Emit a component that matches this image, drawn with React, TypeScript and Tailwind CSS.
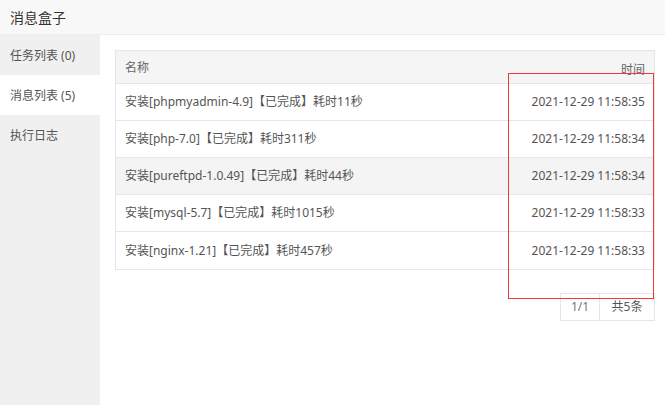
import React from "react";

const rows = [
  { name: "安装[phpmyadmin-4.9]【已完成】耗时11秒", time: "2021-12-29 11:58:35" },
  { name: "安装[php-7.0]【已完成】耗时311秒", time: "2021-12-29 11:58:34" },
  { name: "安装[pureftpd-1.0.49]【已完成】耗时44秒", time: "2021-12-29 11:58:34", hover: true },
  { name: "安装[mysql-5.7]【已完成】耗时1015秒", time: "2021-12-29 11:58:33" },
  { name: "安装[nginx-1.21]【已完成】耗时457秒", time: "2021-12-29 11:58:33" },
];

export default function App() {
  return (
    <div
      className="relative w-[665px] h-[405px] bg-white overflow-hidden text-[#333]"
      style={{ fontFamily: '"Noto Sans", "Noto Sans CJK SC", sans-serif' }}
    >
      <div className="h-[35px] bg-[#f8f8f8] border-b border-[#eee] pl-[10px] flex items-center text-[14px] text-[#333]">
        消息盒子
      </div>
      <div className="flex h-[370px]">
        <div className="w-[100px] bg-[#f0f0f0] flex flex-col text-[12px] text-[#555]">
          <div className="h-[40px] flex items-center pl-[10px] pt-[1px]">任务列表 (0)</div>
          <div className="h-[40px] flex items-center pl-[10px] pt-[1px] bg-white">消息列表 (5)</div>
          <div className="h-[40px] flex items-center pl-[10px] pt-[1px]">执行日志</div>
        </div>
        <div className="flex-1 pl-[15px] pt-[15px]">
          <div className="w-[540px] border border-[#e6e6e6] text-[12px]">
            <div className="h-[33px] bg-[#f5f5f5] flex items-center justify-between px-[9px] text-[#666] border-b border-[#e6e6e6]">
              <span className="pt-[1px]">名称</span>
              <span className="self-end pb-[4px]">时间</span>
            </div>
            {rows.map((r, i) => (
              <div
                key={i}
                className={`h-[37px] flex items-center justify-between px-[9px] text-[#555] ${
                  i < rows.length - 1 ? "border-b border-[#e6e6e6]" : ""
                } ${r.hover ? "bg-[#f4f4f4]" : "bg-white"}`}
              >
                <span>{r.name}</span>
                <span>{r.time}</span>
              </div>
            ))}
          </div>
          <div className="w-[540px] flex justify-end mt-[23px]">
            <div className="flex h-[28px] border border-[#e6e6e6] text-[12px]">
              <div className="w-[39px] flex items-center justify-center text-[#777] border-r border-[#e6e6e6]">1/1</div>
              <div className="w-[54px] flex items-center justify-center text-[#555]">共5条</div>
            </div>
          </div>
        </div>
      </div>
      <div className="absolute left-[508px] top-[73px] w-[146px] h-[226px] border border-[#f03a3a] pointer-events-none" />
    </div>
  );
}
